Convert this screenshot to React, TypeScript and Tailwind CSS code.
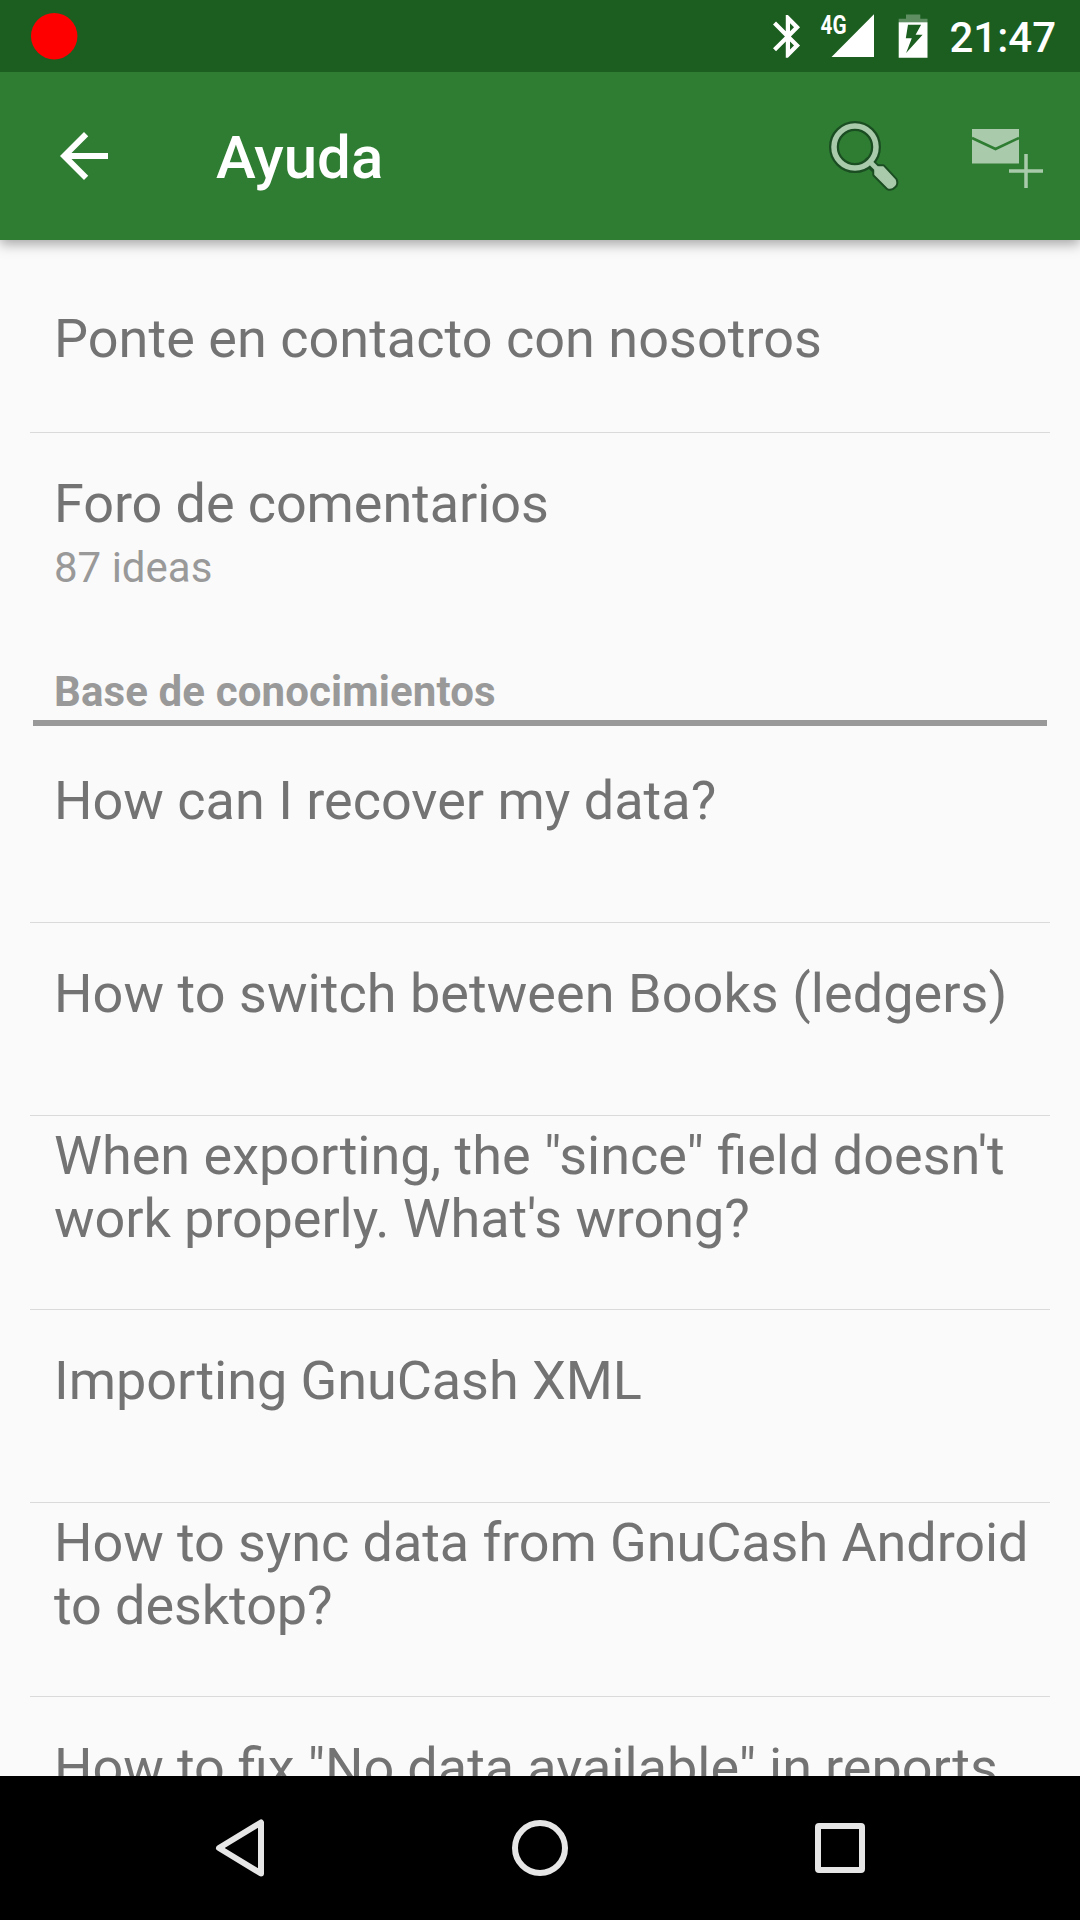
import type { ReactNode } from 'react';

function StatusBar() {
  return (
    <div className="relative z-20 flex h-[72px] shrink-0 items-center bg-[#1b5e20] pr-[24px] pl-[31px]">
      <svg width="47" height="47" viewBox="0 0 47 47">
        <circle cx="23.2" cy="23.2" r="23.2" fill="#f00" />
      </svg>
      <svg className="ml-auto" width="160" height="72" viewBox="0 0 160 72" fill="#fff">
        <path
          transform="translate(-5.6 10.7) scale(2.125 2.14)"
          d="M17.71 7.71L12 2h-1v7.59L6.41 5 5 6.41 10.59 12 5 17.59 6.41 19 11 14.41V22h1l5.71-5.71-4.3-4.29 4.3-4.29zM13 5.83l1.88 1.88L13 9.59V5.83zm1.88 10.46L13 18.17v-3.76l1.88 1.88z"
        />
        <text x="52.5" y="33.6" fontSize="26" fontWeight="700" fontFamily="Roboto, sans-serif" textLength="26" lengthAdjust="spacingAndGlyphs">
          4G
        </text>
        <path d="M63.5 57L106 57V14.2Z" />
        <path fillOpacity=".3" d="M138 14.5h14.3v4.3h7.2v3.5h-28.8v-3.5h7.3z" />
        <path fillRule="evenodd" d="M130.700 22.300h28.800v35.500h-28.800zM140 24.700l-2.200 13.600h6l-5.700 14.700 16.500-18.200h-7l5.500-10.100z" />
      </svg>
      <span className="ml-[21px] pt-[2px] text-[42px] leading-[49px] font-medium text-white">21:47</span>
    </div>
  );
}

function AppBar() {
  return (
    <header className="relative z-10 flex h-[168px] shrink-0 items-center bg-[#2e7d32] pr-[31px] pl-[48px] text-white shadow-[0_4px_12px_rgba(0,0,0,0.35)]">
      <svg width="72" height="72" viewBox="0 0 24 24" fill="#fff">
        <path d="M20 11H7.830l5.590-5.590L12 4l-8 8 8 8 1.410-1.410L7.830 13H20v-2z" />
      </svg>
      <h1 className="ml-[96px] pt-[4px] text-[60px] leading-[70px] font-medium">Ayuda</h1>
      <svg className="ml-auto" width="80" height="80" viewBox="823 116 80 80" fill="none">
        <g stroke="#1b4d22" strokeLinejoin="round" strokeLinecap="round" className="blur-[0.6px]">
          <circle cx="855" cy="147" r="21" strokeWidth="10" />
          <path d="M869 162l6 6" strokeWidth="10" />
          <path d="M875 170l3-3h5l12 13q1.500 4-1 6-3 3-6 1.500l-13-13z" strokeWidth="5.500" />
        </g>
        <g stroke="#a9caab">
          <circle cx="855" cy="147" r="21" strokeWidth="5.500" />
          <path d="M869 161l8 8" strokeWidth="5" />
          <path fill="#a9caab" strokeWidth="1.500" strokeLinejoin="round" d="M875 170l3-3h5l12 13q1.500 4-1 6-3 3-6 1.500l-13-13z" />
        </g>
      </svg>
      <svg className="ml-[66px]" width="80" height="80" viewBox="969 116 80 80" fill="none">
        <path fill="#a9caab" d="M972 129h47v34.500h-47z" />
        <path stroke="#2e7d32" strokeWidth="2.500" d="M972 138l23.500 11 23.500-11" />
        <path stroke="#a9caab" strokeWidth="3.500" d="M1009 171h34M1026 154v34" />
      </svg>
    </header>
  );
}

function Row({ children, className }: { children: ReactNode; className: string }) {
  return (
    <li className={`mx-[30px] border-[#dadada] px-[24px] text-[54px] leading-[63px] text-[#737373] ${className}`}>
      {children}
    </li>
  );
}

export default function App() {
  return (
    <div className="flex h-[1920px] w-[1080px] flex-col overflow-hidden bg-[#fafafa] font-[Roboto,sans-serif]">
      <StatusBar />
      <AppBar />
      <main className="min-h-0 flex-1 overflow-hidden whitespace-nowrap">
        <ul>
          <Row className="h-[193px] border-b pt-[67px] tracking-[0.03px]">Ponte en contacto con nosotros</Row>
          <Row className="h-[199px] pt-[39px]">
            <p className="tracking-[-0.1px]">Foro de comentarios</p>
            <p className="mt-[8px] text-[42px] leading-[49px] text-[#999]">87 ideas</p>
          </Row>
        </ul>
        <h2 className="mx-[33px] h-[94px] border-b-[6px] border-[#999] px-[21px] pt-[35px] text-[42px] leading-[49px] font-bold tracking-[0.12px] text-[#999]">
          Base de conocimientos
        </h2>
        <ul>
          <Row className="h-[197px] border-b pt-[43px]">How can I recover my data?</Row>
          <Row className="h-[193px] border-b pt-[39px] tracking-[0.05px]">How to switch between Books (ledgers)</Row>
          <Row className="h-[194px] border-b pt-[8px]">
            When exporting, the "since" field doesn't
            <br />
            <span className="tracking-[-0.09px]">work properly. What's wrong?</span>
          </Row>
          <Row className="h-[193px] border-b pt-[39px] tracking-[-0.06px]">Importing GnuCash XML</Row>
          <Row className="h-[194px] border-b pt-[8px] tracking-[-0.08px]">
            How to sync data from GnuCash Android
            <br />
            to desktop?
          </Row>
          <Row className="h-[193px] pt-[39px] [word-spacing:-0.35px]">How to fix "No data available" in reports</Row>
        </ul>
      </main>
      <nav className="flex h-[144px] shrink-0 items-center justify-center bg-black">
        <svg width="300" height="72" viewBox="90 1812 300 72" fill="none">
          <path d="M261 1822.500v51l-42-25.500z" stroke="#e6e6e6" strokeWidth="6" strokeLinejoin="round" />
        </svg>
        <svg width="300" height="72" viewBox="390 1812 300 72" fill="none">
          <circle cx="540" cy="1848" r="25" stroke="#e6e6e6" strokeWidth="6" />
        </svg>
        <svg width="300" height="72" viewBox="690 1812 300 72" fill="none">
          <rect x="818" y="1826" width="44" height="44" rx="1" stroke="#e6e6e6" strokeWidth="6" strokeLinejoin="round" />
        </svg>
      </nav>
    </div>
  );
}
